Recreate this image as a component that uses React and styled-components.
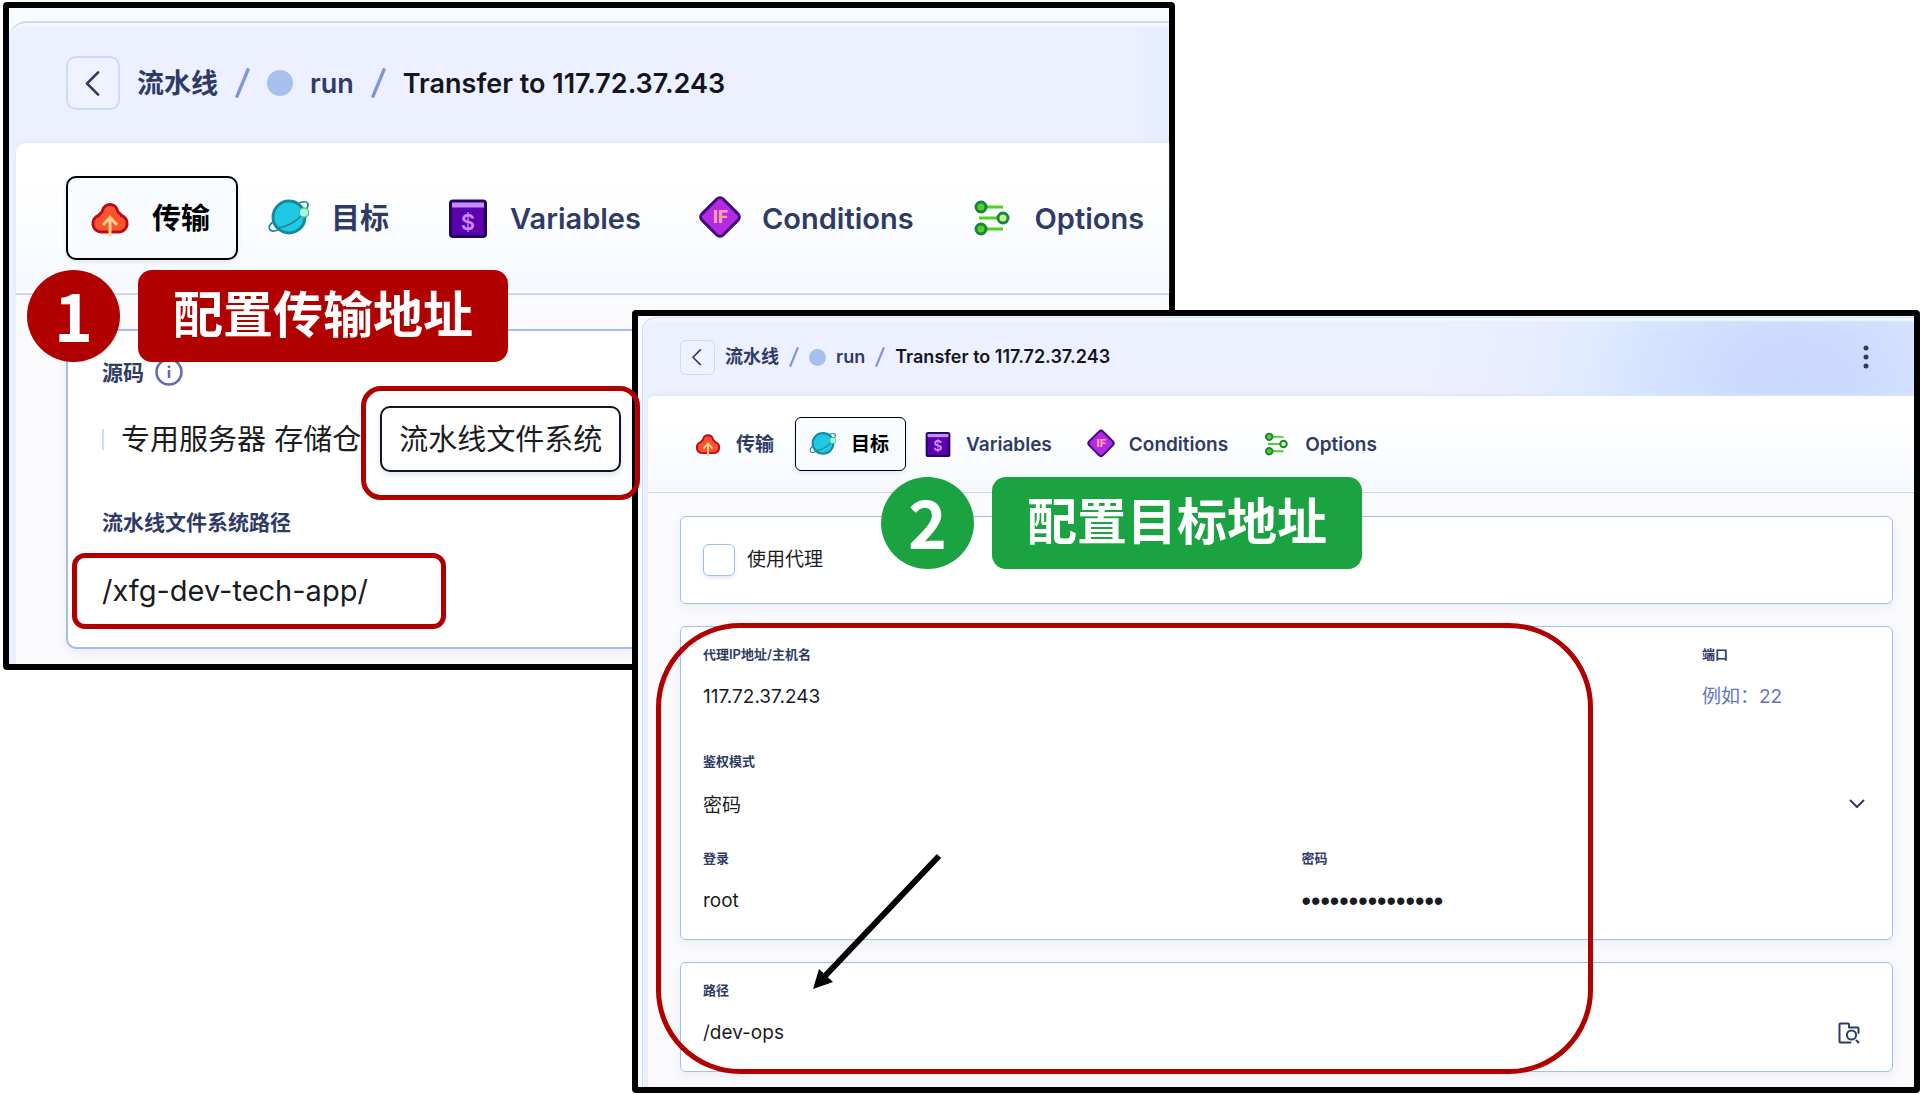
import React from "react";
import styled, { createGlobalStyle, css } from "styled-components";

const GlobalStyle = createGlobalStyle`
  *, *::before, *::after { box-sizing: border-box; }
  body {
    margin: 0;
    background: #ffffff;
    color: #1b1c1f;
    font-family: Inter, "Noto Sans CJK SC", sans-serif;
  }
  button, input, select { font: inherit; color: inherit; margin: 0; }
`;

const ink = "#2f3b66";
const red = "#b00000";
const green = "#1aa340";

/* ---------- window frames ---------- */

const large = css`
  --text: 29px;
  --crumb: 27px;
  --label: 21px;
  --line: 2px;
  --radius: 10px;
  --shell-radius: 18px;
  --strip: 13px;
  --shell-left: 0px;
  --header-height: 120px;
  --header-pad: 57px;
  --body-left: 7px;
  --gutter: 50px;
  --tabs-pad: 33px;
  --tab-height: 84px;
  --tab-pad: 0 26px 0 22px;
  --tab-gap: 7px;
  --tab-icon: 40px;
  --tab-icon-gap: 22px;
  --content-top: 34px;
  --content-bottom: 15px;
  --back: 54px;
  --crumb-gap: 17px;
  --dot: 26px;
  --slash: 30px;
`;

const small = css`
  --text: 19px;
  --crumb: 18px;
  --label: 13px;
  --line: 1px;
  --radius: 6px;
  --shell-radius: 14px;
  --strip: 1px;
  --shell-left: 4px;
  --header-height: 78px;
  --header-pad: 37px;
  --body-left: 5px;
  --gutter: 32px;
  --tabs-pad: 21px;
  --tab-height: 54px;
  --tab-pad: 0 16px 0 14px;
  --tab-gap: 4px;
  --tab-icon: 26px;
  --tab-icon-gap: 15px;
  --content-top: 23px;
  --content-bottom: 15px;
  --back: 35px;
  --crumb-gap: 10px;
  --dot: 17px;
  --slash: 20px;
`;

const Desktop = styled.main`
  position: relative;
  min-height: 1094px;
`;

const Window = styled.section`
  position: absolute;
  border: 6px solid #000;
  border-radius: 4px;
  background: #f8fbff;
  padding: var(--strip) 0 0 var(--shell-left);
`;

const SourceWindow = styled(Window)`
  ${large}
  top: 2px;
  left: 3px;
  width: 61%;
`;

const TargetWindow = styled(Window)`
  ${small}
  top: 310px;
  left: 632px;
  right: 2px;
`;

const Shell = styled.div`
  border-top: var(--line) solid #cddaf4;
  border-left: ${(p) => (p.$edge ? "1px solid #cddaf4" : "0")};
  border-top-left-radius: var(--shell-radius);
  padding-left: var(--body-left);
  background: ${(p) =>
    p.$glow
      ? "radial-gradient(ellipse 420px 300px at calc(100% - 118px) 62px, #c9d8fd 0%, #cbdafd 14%, #d2e0ff 27%, #d6e4ff 38%, #dfebff 50%, #e9edff 66%, #edf0ff 88%), #edf0ff"
      : "linear-gradient(90deg, rgba(232,240,255,0) 97%, #e7effe 98%), #edf0ff"};
  box-shadow: inset 0 4px 2px -1px #f5f8ff;
`;

const Header = styled.header`
  display: flex;
  align-items: center;
  height: var(--header-height);
  margin-left: calc(-1 * var(--body-left));
  padding: 0 36px 0 var(--header-pad);
`;

const Body = styled.div`
  border-top-left-radius: var(--radius);
  background: #fafafd;
  box-shadow: 0 -1px 5px #dbe4fb;
  clip-path: inset(-8px 0 0 -7px);
`;

/* ---------- breadcrumb ---------- */

const BackButton = styled.button`
  display: grid;
  place-items: center;
  width: var(--back);
  height: var(--back);
  padding: 0;
  border: var(--line) solid #cddcf6;
  border-radius: var(--radius);
  background: #eff3ff;
  color: ${ink};
  svg { width: 50%; height: 50%; }
`;

const Crumbs = styled.nav`
  display: flex;
  align-items: center;
  flex: 1;
  gap: var(--crumb-gap);
  margin-left: var(--crumb-gap);
  font-size: var(--crumb);
  font-weight: 600;
  line-height: 1;
  white-space: nowrap;
`;

const Crumb = styled.a`
  display: flex;
  align-items: center;
  gap: var(--crumb-gap);
  color: ${ink};
  text-decoration: none;
`;

const Current = styled.span`
  color: #14161f;
`;

const Dot = styled.i`
  width: var(--dot);
  height: var(--dot);
  border-radius: 50%;
  background: #a9bfef;
`;

const SlashMark = styled.svg`
  width: calc(var(--slash) / 2);
  height: var(--slash);
`;

const MenuButton = styled.button`
  display: grid;
  place-items: center;
  width: 24px;
  height: 34px;
  padding: 0;
  border: 0;
  background: none;
  color: ${ink};
`;

/* ---------- tabs ---------- */

const Tabs = styled.div`
  display: flex;
  gap: var(--tab-gap);
  padding: var(--tabs-pad) 0 var(--tabs-pad) var(--gutter);
  border-bottom: var(--line) solid #c9d8f5;
  border-top-left-radius: var(--radius);
  background: linear-gradient(#fff 25%, #f8fbff 80%, #f5f7fc 98%, #fff 99%);
`;

const Tab = styled.button`
  display: flex;
  align-items: center;
  gap: var(--tab-icon-gap);
  height: var(--tab-height);
  padding: var(--tab-pad);
  border: var(--line) solid ${(p) => (p.$active ? "#000" : "transparent")};
  border-radius: var(--radius);
  background: ${(p) => (p.$active ? "#f8fbff" : "none")};
  box-shadow: ${(p) => (p.$active ? "0 2px 4px #dfe6f5" : "none")};
  color: ${(p) => (p.$active ? "#000" : ink)};
  font-size: var(--text);
  font-weight: 600;
  line-height: 1;
  white-space: nowrap;
  svg { flex: none; width: var(--tab-icon); height: var(--tab-icon); overflow: visible; }
`;

/* ---------- cards and fields ---------- */

const Content = styled.div`
  padding: var(--content-top) ${(p) => (p.$flush ? "0" : "21px")} var(--content-bottom) var(--gutter);
`;

const CardGroup = styled.div`
  position: relative;
  display: grid;
  gap: 22px;
  margin-top: 22px;
`;

const Card = styled.div`
  border: var(--line) solid #a3bdf2;
  border-radius: var(--radius);
  background: #fff;
  box-shadow: 0 4px 8px #eceef6;
  padding: ${(p) => p.$pad};
  ${(p) => p.$flush && css`
    border-right: 0;
    border-top-right-radius: 0;
    border-bottom-right-radius: 0;
  `}
`;

const Label = styled.label`
  display: flex;
  align-items: center;
  gap: 11px;
  height: ${(p) => (p.$large ? "24px" : "16px")};
  color: ${ink};
  font-size: var(--label);
  font-weight: 600;
  line-height: 1;
  svg { width: 28px; height: 28px; }
`;

const Field = styled.div`
  position: relative;
  display: grid;
  gap: 21px;
`;

const fieldText = css`
  display: block;
  width: 100%;
  height: 28px;
  padding: 0;
  border: 0;
  outline: 0;
  background: none;
  font-size: 19px;
  line-height: 28px;
`;

const Input = styled.input`
  ${fieldText}
  &::placeholder { color: #6474b8; opacity: 1; }
  &[type="password"] {
    font-family: "Liberation Sans", Arial, sans-serif;
    font-size: 27px;
  }
`;

const Select = styled.select`
  ${fieldText}
  padding-top: 2px;
  appearance: none;
`;

const Trailing = styled.span`
  display: flex;
  align-items: center;
  gap: 8px;
  padding-right: ${(p) => p.$inset};
  color: ${ink};
  ${Input}, ${Select} { color: #1b1c1f; flex: 1; }
`;

const IconButton = styled.button`
  display: grid;
  padding: 0;
  border: 0;
  background: none;
  color: ${ink};
`;

const Row = styled.div`
  display: grid;
  grid-template-columns: ${(p) => p.$columns};
  column-gap: 30px;
`;

const Rows = styled.div`
  display: grid;
  gap: 32px;
  ${Row}:first-child { padding-bottom: 10px; }
`;

const CheckLabel = styled.label`
  display: flex;
  align-items: center;
  gap: 12px;
  font-size: 19px;
  line-height: 32px;
`;

const Checkbox = styled.input`
  appearance: none;
  width: 32px;
  height: 32px;
  border: 1px solid #a3bdf2;
  border-radius: 6px;
  background: #fff;
  box-shadow: 0 2px 4px #dfe6f7;
`;

const Options = styled.div`
  display: flex;
  align-items: center;
  gap: 19px;
  margin: 22px 0 38px;
  &::before {
    content: "";
    width: 2px;
    height: 21px;
    margin-right: -2px;
    background: #cddcf8;
  }
`;

const Option = styled.button`
  height: 66px;
  padding: 0;
  border: 0;
  background: none;
  font-size: 29px;
  line-height: 1;
  white-space: nowrap;
  ${(p) => p.$active && css`
    padding: 0 17px;
    border: 2px solid #14161f;
    border-radius: 10px;
    background: #fff;
    box-shadow: 0 3px 6px #dfe4f0;
  `}
`;

const PathBox = styled.div`
  position: relative;
  width: 314px;
  margin-top: 35px;
  ${Input} { height: 44px; font-size: 29px; line-height: 44px; }
`;

const OptionBox = styled.div`
  position: relative;
  display: flex;
`;

/* ---------- annotations over the windows ---------- */

const Ring = styled.span`
  position: absolute;
  z-index: 2;
  inset: ${(p) => p.$inset};
  border: 5px solid ${red};
  border-radius: ${(p) => p.$radius};
  pointer-events: none;
`;

const Callout = styled.div`
  position: absolute;
  z-index: 3;
  top: ${(p) => p.$top};
  left: ${(p) => p.$left};
  display: flex;
  gap: 18px;
  color: #fff;
  font-family: "Noto Sans CJK SC", sans-serif;
  font-weight: 700;
  line-height: 86px;
  white-space: nowrap;
`;

const Step = styled.span`
  width: 93px;
  height: 92px;
  border-radius: 50%;
  background: ${(p) => p.$color};
  font-size: 66px;
  text-align: center;
`;

const Caption = styled.span`
  height: 92px;
  padding: 0 35px;
  border-radius: 14px;
  background: ${(p) => p.$color};
  font-size: 50px;
  line-height: 82px;
`;

const Arrow = styled.svg`
  position: absolute;
  top: 227px;
  left: 133px;
  z-index: 3;
  pointer-events: none;
`;

/* ---------- icons ---------- */

const ChevronLeft = () => (
  <svg viewBox="0 0 27 27" fill="none" stroke="currentColor" strokeWidth="2.8" strokeLinecap="round" strokeLinejoin="round" aria-hidden="true">
    <path d="M18.500 1.500L6.500 13.500l12 12" />
  </svg>
);

const Slash = () => (
  <SlashMark viewBox="0 0 15 30" aria-hidden="true">
    <path d="M13.500 .5L1.500 29.500" stroke="#7f95d6" strokeWidth="3.300" />
  </SlashMark>
);

const CloudIcon = () => (
  <svg viewBox="0 0 40 40" aria-hidden="true">
    <path d="M11 34a8.500 8.500 0 0 1-2.500-16.500C10 15 12.500 14.500 12.500 12.500a7.700 7.700 0 0 1 15 0c0 2 2.500 2.500 4 5A8.500 8.500 0 0 1 29 34z" fill="#ff5330" stroke="#b80d18" strokeWidth="3" strokeLinejoin="round" />
    <path d="M20 38.500V21M13 27l7-7.500 7 7.500" fill="none" stroke="#ffd28a" strokeWidth="3" />
  </svg>
);

const PlanetIcon = () => (
  <svg viewBox="0 0 40 40" aria-hidden="true">
    <path d="M5 23c-4 3-5.500 6-4.500 8s4.500 2.500 8.500 1" fill="none" stroke="#17899c" strokeWidth="1.700" />
    <path d="M30 5c4-1.500 7.500-1.500 8.500 0s.5 4-1.500 7" fill="none" stroke="#17899c" strokeWidth="1.700" />
    <circle cx="20" cy="19" r="16" fill="#1fc9e3" stroke="#17899c" strokeWidth="3" />
    <path d="M9 30c8-1 18-6 24-13" fill="none" stroke="#17899c" strokeWidth="1.700" />
    <circle cx="35" cy="14.500" r="4.700" fill="#aaffd2" stroke="#3fb9ac" strokeWidth="1.300" />
  </svg>
);

const VariableIcon = () => (
  <svg viewBox="0 0 40 40" aria-hidden="true">
    <rect x="2.500" y="3" width="35" height="35.500" rx="2.500" fill="#5a00ad" stroke="#1c0a5c" strokeWidth="3" />
    <path d="M4 4.500h32v5H4z" fill="#c98bff" />
    <text x="20" y="31.500" textAnchor="middle" fontFamily="Inter, sans-serif" fontSize="22" fontWeight="600" fill="#c98bff">$</text>
  </svg>
);

const ConditionIcon = () => (
  <svg viewBox="0 0 40 40" aria-hidden="true">
    <rect x="5" y="4" width="30" height="30" rx="4.500" transform="rotate(45 20 19)" fill="#b22be0" stroke="#43087f" strokeWidth="3" />
    <text x="20.500" y="25" textAnchor="middle" fontFamily="Inter, sans-serif" fontSize="17" fontWeight="800" fill="#ffa0b0">IF</text>
  </svg>
);

const OptionIcon = () => (
  <svg viewBox="0 0 40 40" strokeWidth="3" aria-hidden="true">
    <path d="M11 9h19M6 20h19M11 31h19" stroke="#4fd31d" fill="none" />
    <circle cx="8" cy="9" r="5" fill="#4fd31d" stroke="#1c8147" />
    <circle cx="30" cy="20" r="5" fill="#c4ff7e" stroke="#1c8147" />
    <circle cx="8" cy="31" r="5" fill="#4fd31d" stroke="#1c8147" />
  </svg>
);

const InfoIcon = () => (
  <svg viewBox="0 0 28 28" fill="none" stroke="#5b6bb4" strokeWidth="2.500" aria-hidden="true">
    <circle cx="14" cy="14" r="12.500" />
    <path d="M14 12v8M14 7.500v2.500" />
  </svg>
);

const Kebab = () => (
  <svg width="6" height="24" viewBox="0 0 6 24" fill="currentColor" aria-hidden="true">
    <circle cx="3" cy="3" r="2.500" />
    <circle cx="3" cy="12" r="2.500" />
    <circle cx="3" cy="21" r="2.500" />
  </svg>
);

const ChevronDown = () => (
  <svg width="16" height="10" viewBox="0 0 16 10" fill="none" stroke="currentColor" strokeWidth="2" strokeLinecap="round" strokeLinejoin="round" aria-hidden="true">
    <path d="M1.500 1.500L8 8l6.500-6.500" />
  </svg>
);

const FolderSearch = () => (
  <svg width="22" height="22" viewBox="0 0 22 22" fill="none" stroke="currentColor" strokeWidth="2" strokeLinejoin="round" strokeLinecap="round" aria-hidden="true">
    <path d="M12.500 20.500H2.500a1 1 0 0 1-1-1v-17a1 1 0 0 1 1-1h7.500a1 1 0 0 1 1 1v3h8.500a1 1 0 0 1 1 1V11" />
    <circle cx="13.500" cy="13" r="4.600" />
    <path d="M18.500 18.500l2 2" />
  </svg>
);

const tabItems = [
  { name: "传输", Icon: CloudIcon },
  { name: "目标", Icon: PlanetIcon },
  { name: "Variables", Icon: VariableIcon },
  { name: "Conditions", Icon: ConditionIcon },
  { name: "Options", Icon: OptionIcon },
];

function WindowHeader({ menu }) {
  return (
    <Header>
      <BackButton type="button" aria-label="返回"><ChevronLeft /></BackButton>
      <Crumbs>
        <Crumb href="#pipelines">流水线</Crumb>
        <Slash />
        <Crumb href="#run"><Dot />run</Crumb>
        <Slash />
        <Current>Transfer to 117.72.37.243</Current>
      </Crumbs>
      {menu && <MenuButton type="button" aria-label="菜单"><Kebab /></MenuButton>}
    </Header>
  );
}

function TabBar({ active }) {
  return (
    <Tabs role="tablist">
      {tabItems.map(({ name, Icon }) => (
        <Tab key={name} type="button" role="tab" aria-selected={name === active} $active={name === active}>
          <Icon />
          {name}
        </Tab>
      ))}
    </Tabs>
  );
}

export default function App() {
  return (
    <>
      <GlobalStyle />
      <Desktop>
        <SourceWindow>
          <Shell>
            <WindowHeader />
            <Body>
              <TabBar active="传输" />
            </Body>
            <SourceBody>
              <Content $flush>
                <Card $flush $pad="29px 0 34px 34px">
                  <Label as="div" $large>源码<InfoIcon /></Label>
                  <Options>
                    <Option type="button">专用服务器 存储仓</Option>
                    <OptionBox>
                      <Option type="button" $active>流水线文件系统</Option>
                      <Ring $inset="-20px -19px -28px" $radius="20px" />
                    </OptionBox>
                  </Options>
                  <Label htmlFor="fs-path" $large>流水线文件系统路径</Label>
                  <PathBox>
                    <Input id="fs-path" defaultValue="/xfg-dev-tech-app/" />
                    <Ring $inset="-16px -30px" $radius="13px" />
                  </PathBox>
                </Card>
              </Content>
            </SourceBody>
          </Shell>
          <Callout $top="262px" $left="18px">
            <Step $color={red}>1</Step>
            <Caption $color={red}>配置传输地址</Caption>
          </Callout>
        </SourceWindow>

        <TargetWindow>
          <Shell $edge $glow>
            <WindowHeader menu />
            <Body>
              <TabBar active="目标" />
              <Content>
                <Card $pad="27px 22px">
                  <CheckLabel><Checkbox type="checkbox" />使用代理</CheckLabel>
                </Card>
                <CardGroup>
                  <Card $pad="19px 22px 24px">
                    <Rows>
                      <Row $columns="1fr 168px">
                        <Field>
                          <Label htmlFor="host">代理IP地址/主机名</Label>
                          <Input id="host" defaultValue="117.72.37.243" />
                        </Field>
                        <Field>
                          <Label htmlFor="port">端口</Label>
                          <Input id="port" placeholder="例如：22" />
                        </Field>
                      </Row>
                      <Row $columns="1fr">
                        <Field>
                          <Label htmlFor="auth">鉴权模式</Label>
                          <Trailing $inset="5px">
                            <Select id="auth"><option>密码</option></Select>
                            <ChevronDown />
                          </Trailing>
                        </Field>
                      </Row>
                      <Row $columns="1fr 1fr">
                        <Field>
                          <Label htmlFor="login">登录</Label>
                          <Input id="login" defaultValue="root" />
                        </Field>
                        <Field>
                          <Label htmlFor="password">密码</Label>
                          <Input id="password" type="password" defaultValue="abcdefghijklmno" />
                        </Field>
                      </Row>
                    </Rows>
                  </Card>
                  <Card $pad="19px 22px 24px">
                    <Field>
                      <Label htmlFor="path">路径</Label>
                      <Trailing $inset="10px">
                        <Input id="path" defaultValue="/dev-ops" />
                        <IconButton type="button" aria-label="浏览"><FolderSearch /></IconButton>
                      </Trailing>
                    </Field>
                  </Card>
                  <Ring $inset="-3px 300px -2px -24px" $radius="84px" />
                  <Arrow width="130" height="138" viewBox="0 0 130 138" aria-hidden="true">
                    <path d="M126 3L12 123" stroke="#000" strokeWidth="6" />
                    <path d="M0 136L6 116L20 129z" fill="#000" />
                  </Arrow>
                </CardGroup>
              </Content>
            </Body>
          </Shell>
          <Callout $top="161px" $left="243px">
            <Step $color={green}>2</Step>
            <Caption $color={green}>配置目标地址</Caption>
          </Callout>
        </TargetWindow>
      </Desktop>
    </>
  );
}

const SourceBody = styled.div`
  background: #fafafd;
`;
